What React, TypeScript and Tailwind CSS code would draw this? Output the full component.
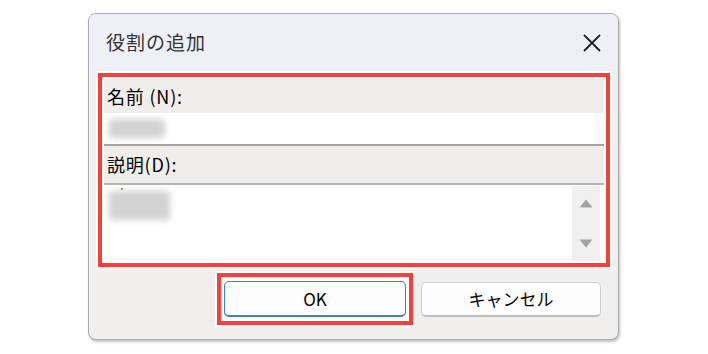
import React from 'react';

const jp = { fontFamily: '"Noto Sans CJK JP", "Noto Sans", sans-serif' };

const CloseIcon = () => (
  <svg width="18" height="18" viewBox="0 0 18 18" fill="none">
    <path d="M1.5 1.5 L16.5 16.5 M16.5 1.5 L1.5 16.5" stroke="#1f1f1f" strokeWidth="1.8" strokeLinecap="round" />
  </svg>
);

const Blur = ({ w, h }: { w: number; h: number }) => (
  <div
    className="bg-[#d2d2d2] blur-[3px] rounded-sm"
    style={{ width: w, height: h }}
  />
);

export default function App() {
  return (
    <div className="w-[708px] h-[354px] bg-white pt-[13px] pl-[88px]" style={jp}>
      {/* ダイアログ */}
      <div className="w-[531px] h-[327px] rounded-[8px] border border-[#a9a9a9] overflow-hidden flex flex-col bg-[#f0efee] shadow-[1px_2px_3px_rgba(0,0,0,0.25)]">
        {/* タイトルバー */}
        <div className="h-[57px] shrink-0 bg-[#eff0f6] flex items-center justify-between pl-[17px] pr-[17px]">
          <span className="text-[19px] text-[#333] tracking-[1px]">役割の追加</span>
          <CloseIcon />
        </div>

        {/* 入力欄 */}
        <div className="ml-[9px] mt-[2px] w-[512px] h-[194px] border-4 border-[#f4413a] bg-white p-[2px] shadow-[0_0_0_2px_white]">
          <div className="flex flex-col h-full">
            <div className="h-[34px] bg-[#efeeec] flex items-center pl-[3px] text-[18px] tracking-[0.8px] text-black">名前 (N):</div>
            <div className="h-[31px] bg-white flex items-center pl-[5px]">
              <Blur w={56} h={19} />
            </div>
            <div className="h-[2px] bg-[#a3a3a3]" />
            <div className="h-[37px] bg-[#efeeec] flex items-center pl-[3px] text-[18px] tracking-[0.8px] text-black">説明(D):</div>
            <div className="h-[2px] bg-[#b4b4b4]" />
            <div className="flex-1 bg-white flex pr-[4px]">
              <div className="flex-1 pl-[5px] pt-[3px] flex flex-col">
                <div className="w-[2px] h-[2px] bg-[#777] ml-[12px]" />
                <div className="mt-[1px]">
                  <Blur w={61} h={29} />
                </div>
              </div>
              <div className="w-[28px] mt-[1px] bg-[#f0f0f0] flex flex-col items-center justify-between py-[13px]">
                <svg width="14" height="9" viewBox="0 0 14 9"><path d="M7 0.5 L13.5 8.5 L0.5 8.5 Z" fill="#a3a3a3" /></svg>
                <svg width="14" height="9" viewBox="0 0 14 9"><path d="M0.5 0.5 L13.5 0.5 L7 8.5 Z" fill="#a3a3a3" /></svg>
              </div>
            </div>
          </div>
        </div>

        {/* ボタン */}
        <div className="flex items-center mt-[6px] ml-[128px]">
          <div className="border-4 border-[#f4413a] bg-white px-[3px] py-[4px] shadow-[0_0_0_2px_white]">
            <button className="w-[182px] h-[36px] rounded-[5px] bg-[#fdfdfd] border-[1.5px] border-[#3f7fba] border-b-[2px] text-[17px] text-black">
              OK
            </button>
          </div>
          <button className="ml-[8px] w-[180px] h-[35px] rounded-[5px] bg-[#fdfdfd] border border-[#cfcfcf] border-b-[2px] border-b-[#bdbdbd] text-[17px] text-black">
            キャンセル
          </button>
        </div>
      </div>
    </div>
  );
}
